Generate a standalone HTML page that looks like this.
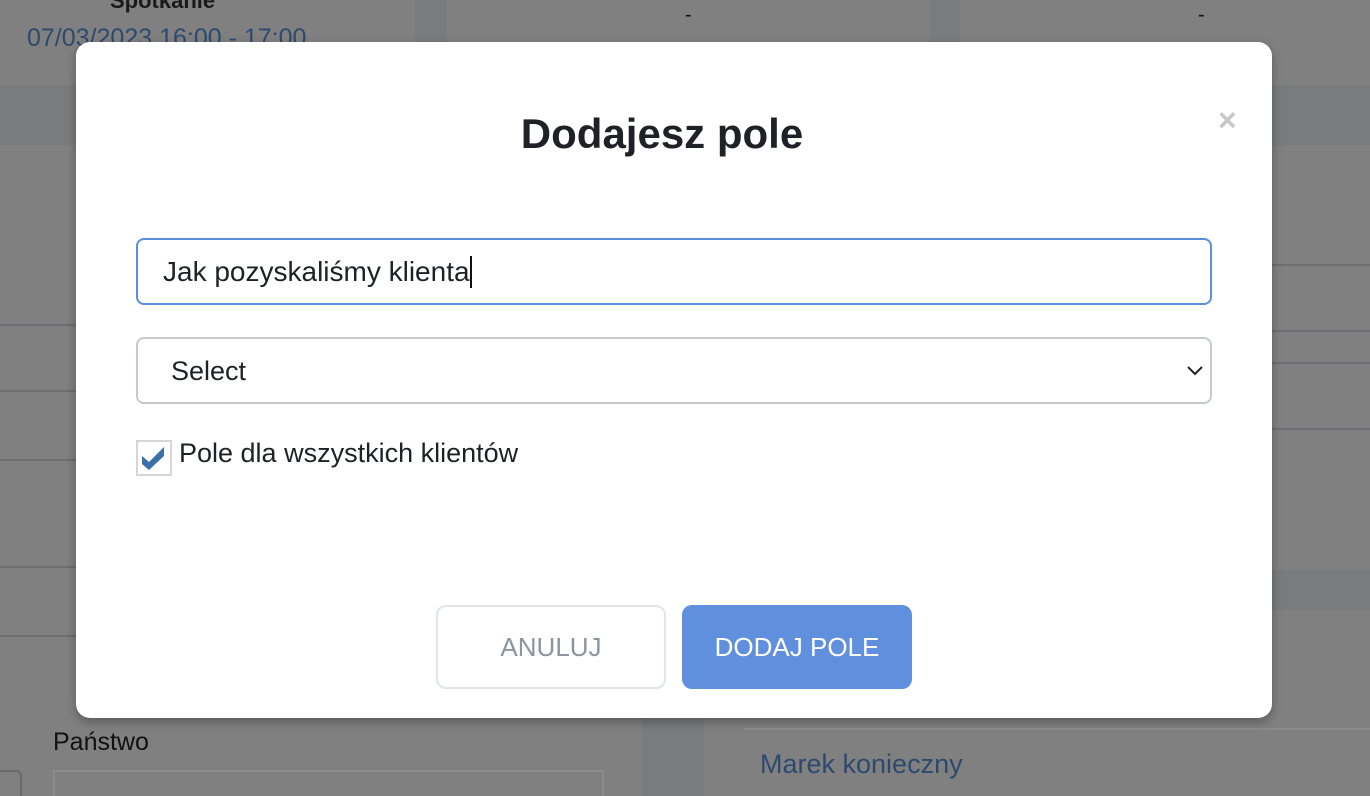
<!DOCTYPE html>
<html><head><meta charset="utf-8"><style>
*{box-sizing:border-box;margin:0;padding:0}
html,body{width:1370px;height:796px;overflow:hidden}
body{background:#7a7b7d;font-family:"Liberation Sans",sans-serif;position:relative}
.c{position:absolute;background:#808080}
.ln{position:absolute;height:2px;background:#6c6e71}
.modal{position:absolute;left:76px;top:42px;width:1196px;height:676px;background:#fff;border-radius:14px;box-shadow:0 4px 10px rgba(0,0,0,.3)}
h1{position:absolute;left:0;right:24px;text-align:center;font-size:42px;font-weight:bold;color:#1e2126}
</style></head><body>
<div class="c" style="left:0;top:0;width:415px;height:85px"></div>
<div class="c" style="left:447px;top:0;width:483px;height:85px"></div>
<div class="c" style="left:960px;top:0;width:410px;height:85px"></div>
<div style="position:absolute;left:110px;top:-12px;font-size:22px;font-weight:bold;color:#1a1a1a">Spotkanie</div>
<div style="position:absolute;left:27px;top:24px;font-size:25px;color:#2d4a6e">07/03/2023 16:00 - 17:00</div>
<div style="position:absolute;left:685px;top:4px;font-size:20px;color:#111">-</div>
<div style="position:absolute;left:1198px;top:4px;font-size:20px;color:#111">-</div>
<div class="c" style="left:0;top:145px;width:642px;height:651px"></div>
<div class="c" style="left:704px;top:145px;width:666px;height:425px"></div>
<div class="c" style="left:704px;top:610px;width:666px;height:186px"></div>
<div class="ln" style="left:0;top:324px;width:80px"></div>
<div class="ln" style="left:0;top:390px;width:80px"></div>
<div class="ln" style="left:0;top:459px;width:80px"></div>
<div class="ln" style="left:0;top:566px;width:80px"></div>
<div class="ln" style="left:0;top:635px;width:80px"></div>
<div class="ln" style="left:1272px;top:264px;width:98px"></div>
<div class="ln" style="left:1272px;top:330px;width:98px"></div>
<div class="ln" style="left:1272px;top:362px;width:98px"></div>
<div class="ln" style="left:1272px;top:428px;width:98px"></div>
<div class="ln" style="left:744px;top:728px;width:626px;background:#8a8a8a"></div>
<div style="position:absolute;left:53px;top:728px;font-size:25px;color:#111">Państwo</div>
<div style="position:absolute;left:53px;top:770px;width:551px;height:30px;border:2px solid #8c8c8c;border-bottom:none"></div>
<div style="position:absolute;left:-10px;top:770px;width:32px;height:30px;border:2px solid #6a6a6a;border-bottom:none;border-radius:6px 6px 0 0"></div>
<div style="position:absolute;left:760px;top:749px;font-size:27px;color:#2d4a6e">Marek konieczny</div>
<div class="modal">
<h1 style="top:68px">Dodajesz pole</h1>
<div style="position:absolute;left:1142px;top:60px;font-size:32px;font-weight:bold;color:#c8c8c8">×</div>
<div style="position:absolute;left:60px;top:196px;width:1076px;height:67px;border:2px solid #5b8fdc;border-radius:8px;font-size:28px;color:#1e2126;padding:16px 0 0 25px">Jak pozyskaliśmy klienta<span style="display:inline-block;width:2px;height:32px;background:#111;vertical-align:-7px"></span></div>
<div style="position:absolute;left:60px;top:295px;width:1076px;height:67px;border:2px solid #c6c9cd;border-radius:8px;font-size:27px;color:#1e2126;padding:17px 0 0 33px">Select
<svg style="position:absolute;right:6px;top:26px" width="18" height="12" viewBox="0 0 18 12"><path d="M2 2l7 7 7-7" fill="none" stroke="#222" stroke-width="2"/></svg></div>
<div style="position:absolute;left:60px;top:398px;width:36px;height:36px;border:2px solid #d6d6d6;background:#fff">
<svg width="32" height="32" viewBox="0 0 32 32"><path d="M4 14l7 6 15-15v9L11 28 4 22z" fill="#3c70a8"/></svg></div>
<div style="position:absolute;left:103px;top:396px;font-size:27px;color:#1e2126">Pole dla wszystkich klientów</div>
<div style="position:absolute;left:360px;top:563px;width:230px;height:84px;border:2px solid #e2e5e9;border-radius:10px;text-align:center;line-height:80px;font-size:26px;color:#8b95a1">ANULUJ</div>
<div style="position:absolute;left:606px;top:563px;width:230px;height:84px;background:#5f8fdd;border-radius:10px;text-align:center;line-height:84px;font-size:26px;color:#fff">DODAJ POLE</div>
</div>
</body></html>
